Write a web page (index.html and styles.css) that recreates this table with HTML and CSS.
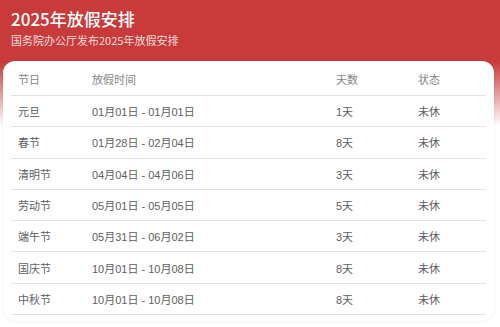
FILE: index.html
```html
<!DOCTYPE html>
<html lang="zh-CN">
<head>
<meta charset="utf-8">
<title>2025年放假安排</title>
<link rel="stylesheet" href="styles.css">
</head>
<body>
<header class="hero">
  <h1 class="title">2025年放假安排</h1>
  <p class="subtitle">国务院办公厅发布2025年放假安排</p>
</header>
<main class="card">
  <div class="row head">
    <div class="cell">节日</div>
    <div class="cell">放假时间</div>
    <div class="cell">天数</div>
    <div class="cell">状态</div>
  </div>
  <div class="row">
    <div class="cell">元旦</div>
    <div class="cell">01月01日 - 01月01日</div>
    <div class="cell">1天</div>
    <div class="cell">未休</div>
  </div>
  <div class="row">
    <div class="cell">春节</div>
    <div class="cell">01月28日 - 02月04日</div>
    <div class="cell">8天</div>
    <div class="cell">未休</div>
  </div>
  <div class="row">
    <div class="cell">清明节</div>
    <div class="cell">04月04日 - 04月06日</div>
    <div class="cell">3天</div>
    <div class="cell">未休</div>
  </div>
  <div class="row">
    <div class="cell">劳动节</div>
    <div class="cell">05月01日 - 05月05日</div>
    <div class="cell">5天</div>
    <div class="cell">未休</div>
  </div>
  <div class="row">
    <div class="cell">端午节</div>
    <div class="cell">05月31日 - 06月02日</div>
    <div class="cell">3天</div>
    <div class="cell">未休</div>
  </div>
  <div class="row">
    <div class="cell">国庆节</div>
    <div class="cell">10月01日 - 10月08日</div>
    <div class="cell">8天</div>
    <div class="cell">未休</div>
  </div>
  <div class="row">
    <div class="cell">中秋节</div>
    <div class="cell">10月01日 - 10月08日</div>
    <div class="cell">8天</div>
    <div class="cell">未休</div>
  </div>
</main>
</body>
</html>
```
FILE: styles.css
```css
html, body {
  margin: 0;
  padding: 0;
}
body {
  width: 500px;
  height: 327px;
  overflow: hidden;
  background: linear-gradient(to bottom, #c93a3a 0, #c93a3a 62px, #ffffff 126px, #ffffff 100%);
  font-family: "Liberation Sans", "Noto Sans CJK SC", sans-serif;
}
.hero {
  padding: 7px 11px 0;
  height: 54px;
  box-sizing: border-box;
  color: #fff;
}
.title {
  margin: 0;
  font-family: "Noto Sans CJK SC", sans-serif;
  font-size: 17px;
  font-weight: 500;
  line-height: 24px;
}
.subtitle {
  margin: 0;
  font-family: "Noto Sans CJK SC", sans-serif;
  font-size: 11px;
  line-height: 18px;
  color: rgba(255, 255, 255, 0.85);
}
.card {
  margin: 7px 6px 0 3px;
  background: #fff;
  border-radius: 12px;
  padding: 0 8px 6px;
  box-shadow: 0 1px 3px rgba(0, 0, 0, 0.06);
}
.row {
  display: grid;
  grid-template-columns: 74px 244px 82px 1fr;
  align-items: center;
  height: 31.3px;
  box-sizing: border-box;
  border-bottom: 1px solid #e3e3e3;
  font-size: 11px;
  color: #606060;
}
.row.head {
  height: 35px;
  color: #858585;
  padding-top: 2px;
}
.cell {
  padding-left: 7px;
  white-space: nowrap;
}
```
